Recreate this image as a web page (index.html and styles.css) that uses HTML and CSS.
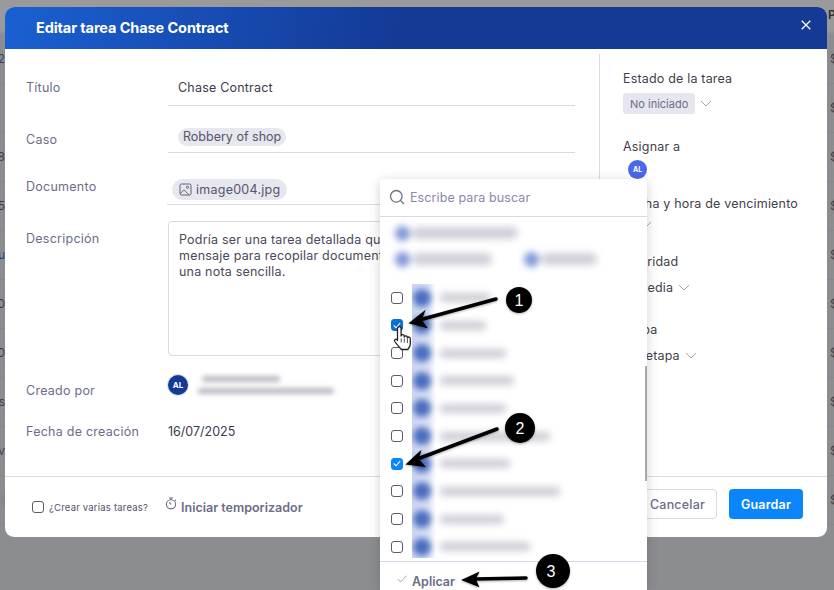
FILE: index.html
```html
<!DOCTYPE html>
<html lang="es">
<head>
<meta charset="utf-8">
<title>Editar tarea</title>
<link rel="stylesheet" href="styles.css">
</head>
<body>
<div class="backdrop">
  <div class="bg-head"><span class="bg-right bg-p">Pe</span></div>
  <div class="bg-row"><span class="bg-left">2</span><span class="bg-right">$$</span></div>
  <div class="bg-row"><span class="bg-right">$$</span></div>
  <div class="bg-row"><span class="bg-left">08</span><span class="bg-right">$$</span></div>
  <div class="bg-row"><span class="bg-left">55</span><span class="bg-right">$$</span></div>
  <div class="bg-row"><span class="bg-left bg-blue">u</span><span class="bg-right">$$</span></div>
  <div class="bg-row"><span class="bg-left">0</span><span class="bg-right">$$</span></div>
  <div class="bg-row"><span class="bg-left">20</span><span class="bg-right">$$</span></div>
  <div class="bg-row"><span class="bg-left">es</span><span class="bg-right">$$</span></div>
  <div class="bg-row"><span class="bg-left">v</span><span class="bg-right">$$</span></div>
  <div class="bg-row bg-last">
    <span class="bg-blur bg-b1"></span>
    <span class="bg-blur-av"></span>
    <span class="bg-blur bg-b2"></span>
    <span class="bg-blur bg-b3"></span>
    <span class="bg-select">Seleccione una opción...</span>
    <span class="bg-right">$$</span>
  </div>
</div>

<div class="modal">
  <header class="modal-head">
    <h1 class="modal-title">Editar tarea Chase Contract</h1>
    <svg class="close-icon" width="10" height="10" viewBox="0 0 10 10"><path d="M.7.7l8.6 8.6M9.3.7L.7 9.300" stroke="#fff" stroke-width="1.300" fill="none"/></svg>
  </header>
  <div class="modal-main">
    <div class="form">
      <div class="row row-title">
        <div class="label">Título</div>
        <div class="value">Chase Contract</div>
      </div>
      <div class="row row-case">
        <div class="label">Caso</div>
        <div class="value"><span class="chip">Robbery of shop</span></div>
      </div>
      <div class="row row-doc">
        <div class="label">Documento</div>
        <div class="value"><span class="chip chip-doc">
          <svg width="13" height="13" viewBox="0 0 13 13" fill="none" stroke="#5f5e78" stroke-width="1"><rect x="1" y="1" width="11" height="11" rx="1.500"/><circle cx="8.500" cy="4.300" r="1.100"/><path d="M1.300 10.500L5 6.800l5 5"/></svg>
          image004.jpg</span></div>
      </div>
      <div class="row row-desc">
        <div class="label">Descripción</div>
        <div class="textarea">Podría ser una tarea detallada que<br>mensaje para recopilar documentos<br>una nota sencilla.</div>
      </div>
      <div class="row row-creator">
        <div class="label">Creado por</div>
        <div class="creator">
          <span class="avatar avatar-dark">AL</span>
          <div class="creator-blur"><span class="cb cb1"></span><span class="cb cb2"></span></div>
        </div>
      </div>
      <div class="row row-date">
        <div class="label">Fecha de creación</div>
        <div class="date">16/07/2025</div>
      </div>
    </div>
    <aside class="side">
      <div class="side-label side-first">Estado de la tarea</div>
      <div class="side-value side-status"><span class="status">No iniciado</span>
        <svg class="chev" width="12" height="7" viewBox="0 0 12 7"><path d="M1 1l5 5 5-5"/></svg></div>
      <div class="side-label side-assign">Asignar a</div>
      <span class="avatar avatar-light">AL</span>
      <div class="side-label side-due">Fecha y hora de vencimiento</div>
      <div class="side-value side-dueval"><svg class="chev" width="12" height="7" viewBox="0 0 12 7"><path d="M1 1l5 5 5-5"/></svg></div>
      <div class="side-label side-gap">Prioridad</div>
      <div class="side-value side-prio">Media <svg class="chev" width="12" height="7" viewBox="0 0 12 7"><path d="M1 1l5 5 5-5"/></svg></div>
      <div class="side-label side-gap2">Etapa</div>
      <div class="side-value">Sin etapa <svg class="chev" width="12" height="7" viewBox="0 0 12 7"><path d="M1 1l5 5 5-5"/></svg></div>
    </aside>
  </div>
  <footer class="modal-foot">
    <span class="box"></span>
    <span class="multi">¿Crear varias tareas?</span>
    <span class="timer">
      <svg width="12" height="13" viewBox="0 0 12 13" fill="none" stroke="#6d6c88" stroke-width="1.100"><circle cx="6" cy="7.300" r="4.600"/><path d="M4 1h4M6 1v2M6 7.300l-1.800-2M10 2.800l1 1"/></svg>
      Iniciar temporizador</span>
    <div class="actions">
      <button class="btn btn-cancel">Cancelar</button>
      <button class="btn btn-save">Guardar</button>
    </div>
  </footer>
</div>

<div class="popup">
  <div class="search">
    <svg width="16" height="16" viewBox="0 0 16 16" fill="none" stroke="#6f7084" stroke-width="1.300"><circle cx="7.300" cy="7.300" r="5.800"/><path d="M11.500 11.500L15 15"/></svg>
    <span>Escribe para buscar</span>
  </div>
  <div class="picked">
    <div class="picked-line"><span class="pk-av"></span><span class="pk-bar pk-a"></span></div>
    <div class="picked-line"><span class="pk-av"></span><span class="pk-bar pk-b"></span><span class="pk-av pk-next"></span><span class="pk-bar pk-c"></span></div>
  </div>
  <div class="list">
    <div class="item"><span class="box"></span><div class="person"><span class="p-av"></span><span class="p-name n1"></span></div></div>
    <div class="item"><span class="box box-on box-hover"><svg width="8" height="7" viewBox="0 0 8 7"><path d="M.8 3.500l2.300 2.300L7.200 1" stroke="#fff" stroke-width="1.100" fill="none"/></svg></span><div class="person"><span class="p-av"></span><span class="p-name n2"></span></div></div>
    <div class="item"><span class="box"></span><div class="person"><span class="p-av"></span><span class="p-name n3"></span></div></div>
    <div class="item"><span class="box"></span><div class="person"><span class="p-av"></span><span class="p-name n4"></span></div></div>
    <div class="item"><span class="box"></span><div class="person"><span class="p-av"></span><span class="p-name n5"></span></div></div>
    <div class="item"><span class="box"></span><div class="person"><span class="p-av"></span><span class="p-name n6"></span></div></div>
    <div class="item"><span class="box box-on"><svg width="8" height="7" viewBox="0 0 8 7"><path d="M.8 3.500l2.300 2.300L7.200 1" stroke="#fff" stroke-width="1.100" fill="none"/></svg></span><div class="person"><span class="p-av"></span><span class="p-name n7"></span></div></div>
    <div class="item"><span class="box"></span><div class="person"><span class="p-av"></span><span class="p-name n8"></span></div></div>
    <div class="item"><span class="box"></span><div class="person"><span class="p-av"></span><span class="p-name n9"></span></div></div>
    <div class="item"><span class="box"></span><div class="person"><span class="p-av"></span><span class="p-name n10"></span></div></div>
  </div>
  <div class="apply">
    <svg width="10" height="8" viewBox="0 0 10 8"><path d="M.7 4l3 3L9.300.7" stroke="#a5a4ba" stroke-width="1" fill="none"/></svg>
    <span>Aplicar</span>
  </div>
  <span class="scrollbar"></span>
</div>

<svg class="marks" width="834" height="590" viewBox="0 0 834 590">
  <defs>
    <filter id="soft" x="-20%" y="-20%" width="140%" height="140%"><feDropShadow dx="0" dy="1" stdDeviation="1" flood-color="#000" flood-opacity=".3"/></filter>
  </defs>
  <g filter="url(#soft)">
    <path d="M496 299L423 319" stroke="#000" stroke-width="3.500" stroke-linecap="round"/>
    <path d="M410 323L424 312L421 320L426 327Z" fill="#000" stroke="#000" stroke-width="1.500"/>
    <circle cx="519" cy="300" r="13"/>
    <path d="M497 429L420 458" stroke="#000" stroke-width="3.500" stroke-linecap="round"/>
    <path d="M407 464L420 452L418 459L424 466Z" fill="#000" stroke="#000" stroke-width="1.500"/>
    <circle cx="520" cy="428" r="15"/>
    <path d="M526 578L476 579" stroke="#000" stroke-width="3.500" stroke-linecap="round"/>
    <path d="M463 580L478 573L475 579L478 586Z" fill="#000" stroke="#000" stroke-width="1.500"/>
    <circle cx="553" cy="571" r="17"/>
  </g>
  <text class="mark-num" x="519" y="305.500">1</text>
  <text class="mark-num" x="520" y="433.500">2</text>
  <text class="mark-num" x="551" y="577">3</text>
  <g transform="translate(0 -1.500)">
    <path d="M397.500 330a1.800 1.800 0 0 1 3.600 0v7.500a1.600 1.600 0 0 1 3.200 0.300v.7a1.600 1.600 0 0 1 3.100.3v.7a1.500 1.500 0 0 1 2.900.5v5.500c0 2.500-1 3.800-2.500 5.500h-6.500c-2-2.500-4.500-5-6.500-8-1-1.800 1-3 2.200-1.800l.5.800z" fill="#fff" stroke="#222" stroke-width="1.300" stroke-linejoin="round"/>
    <path d="M401.200 340v4M404.300 340v4M407.400 340.500v4" stroke="#222" stroke-width=".8"/>
  </g>
</svg>
</body>
</html>
```
FILE: styles.css
```css
* { box-sizing: border-box; }
html, body { margin: 0; height: 590px; overflow: hidden; }
body {
  position: relative;
  font-family: Inter, "Noto Sans", "Liberation Sans", sans-serif;
  font-size: 12.5px;
  color: #3b3a48;
  background: #8c8d90;
}

/* Dimmed page behind the dialog */
.backdrop {
  position: absolute;
  inset: 0;
  display: flex;
  flex-direction: column;
  background: #8c8d90;
  overflow: hidden;
}
.bg-head { height: 35px; background: linear-gradient(#9a9a9a 30px, #8c8d90 35px); display: flex; align-items: center; flex: none; padding-bottom: 5px; }
.bg-row { height: 49px; flex: none; display: flex; align-items: center; border-bottom: 1px solid #86868a; position: relative; }
.bg-left {
  width: 5px; height: 16px; overflow: hidden; display: flex; justify-content: flex-end;
  white-space: nowrap; color: #3f3f48; font-size: 12px; line-height: 16px;
}
.bg-blue { color: #27417f; }
.bg-right {
  margin-left: auto; width: 4px; overflow: hidden; white-space: nowrap;
  color: #3f3f4c; font-size: 12px; line-height: 14px;
}
.bg-p { color: #2b2b33; font-weight: 600; width: 6px; margin-left: auto; }
.bg-last { padding-left: 5px; }
.bg-blur { height: 9px; background: #6d6e72; border-radius: 3px; filter: blur(3px); flex: none; }
.bg-b1 { width: 68px; margin-right: 117px; }
.bg-blur-av { width: 18px; height: 20px; border-radius: 50%; background: #35508f; filter: blur(2px); margin-right: 12px; flex: none; }
.bg-b2 { width: 70px; height: 14px; margin-right: 60px; }
.bg-b3 { width: 30px; margin-right: 284px; }
.bg-select { color: #2a2a32; font-size: 10.5px; letter-spacing: .15px; white-space: nowrap; }

/* Dialog */
.modal {
  position: absolute;
  left: 5px;
  top: 7px;
  width: 822px;
  height: 530px;
  background: #fff;
  border-radius: 9px;
  display: flex;
  flex-direction: column;
}
.modal-head {
  height: 42px;
  flex: none;
  border-radius: 9px 9px 0 0;
  background: linear-gradient(100deg, #1a60d2 0%, #143a96 48%, #143a96 100%);
  display: flex;
  align-items: center;
  justify-content: space-between;
  padding: 0 16px 0 31px;
}
.modal-title { margin: 0 0 2px; color: #fff; font-size: 14.500px; font-weight: 700; letter-spacing: -.1px; }
.close-icon { margin-top: -6px; }

.modal-main { flex: 1; display: flex; min-height: 0; }
.form { width: 594px; flex: none; padding: 21px 0 0 21px; }
.row { display: grid; grid-template-columns: 142px 407px; align-items: start; }
.label { color: #6d6c88; line-height: 16px; padding-top: 26px; letter-spacing: .25px; }
.value { border-bottom: 1px solid #d9d7e8; color: #3b3a48; }

.row-title .label { padding-top: 10px; }
.row-title .value { height: 36px; padding: 9px 0 0 10px; line-height: 18px; letter-spacing: .2px; }
.row-case .value { height: 47px; padding: 22px 0 0 10px; }
.row-doc .value { height: 52px; padding: 26px 0 0 5px; margin-left: -1px; }
.chip {
  display: inline-flex; align-items: center; height: 18px; padding: 0 5px;
  background: #e7e7ef; border-radius: 9px; color: #55546a; line-height: 18px;
}
.chip-doc { height: 21px; border-radius: 11px; gap: 4px; padding: 0 7px; letter-spacing: .25px; }
.textarea {
  margin-top: 16px; height: 135px; border: 1px solid #d9d7e8; border-radius: 4px;
  padding: 10px 10px; line-height: 16px; color: #4a4958; white-space: nowrap; overflow: hidden;
  font-size: 12.500px; letter-spacing: .2px;
}
.row-creator { height: 42px; }
.row-creator .label { padding-top: 27px; }
.creator { display: flex; align-items: center; gap: 10px; padding-top: 19px; }
.avatar {
  display: flex; align-items: center; justify-content: center; flex: none;
  border-radius: 50%; color: #fff; font-weight: 700; font-size: 8px;
}
.avatar-dark { width: 20px; height: 20px; background: #143a96; box-shadow: 0 0 0 1px #dfe3f0; }
.avatar-light { width: 19px; height: 19px; background: #4a68e8; margin: 5px 0 0 5px; font-size: 7px; }
.creator-blur { display: flex; flex-direction: column; gap: 6px; filter: blur(2.500px); }
.cb { display: block; height: 6px; background: #b9b9c4; border-radius: 3px; }
.cb1 { width: 78px; margin-left: 4px; }
.cb2 { width: 136px; }
.date { padding-top: 26px; line-height: 16px; color: #3b3a48; }

/* Right column */
.side { flex: 1; margin-top: 5px; border-left: 1px solid #d9d7e8; padding-left: 23px; color: #3f3f4a; }
.side-label { line-height: 16px; color: #3f3f4a; letter-spacing: .18px; }
.side-first { margin-top: 17px; }
.side-value { display: flex; align-items: center; gap: 5px; height: 22px; margin-top: 6px; color: #3f3f4a; letter-spacing: .18px; }
.side-status { height: 21px; }
.status { display: flex; align-items: center; height: 21px; padding: 0 7px; background: #e6e6ee; border-radius: 3px; color: #6d6c88; font-size: 11px; letter-spacing: 0; }
.side-assign { margin-top: 25px; }
.side-due { margin-top: 17px; }
.side-dueval { padding-left: 17px; height: 20px; margin-top: 2px; }
.side-gap { margin-top: 20px; }
.side-prio { padding-left: 13px; }
.side-gap2 { margin-top: 24px; }
.chev { fill: none; stroke: #a5a4ba; stroke-width: 1; flex: none; }

/* Footer */
.modal-foot {
  height: 61px; flex: none; border-top: 1px solid #d9d7e8;
  display: flex; align-items: center; padding: 0 24px 0 27px;
}
.box {
  display: inline-flex; align-items: center; justify-content: center;
  width: 12px; height: 12px; flex: none; background: #fff;
  border: 1px solid #5a5a70; border-radius: 3px;
}
.box-on { background: #0a85fb; border-color: #0a85fb; }
.box-hover { background: #0a6fd4; border-color: #0a6fd4; }
.multi { margin-left: 5px; font-size: 9.500px; color: #55546a; letter-spacing: .2px; }
.timer { margin-left: 17px; display: flex; align-items: center; gap: 4px; font-weight: 600; font-size: 12.500px; color: #6d6c88; }
.timer svg { margin-top: -8px; }
.actions { margin-left: auto; display: flex; gap: 12px; margin-bottom: 6px; }
.btn { height: 30px; border-radius: 4px; font: inherit; font-size: 12.500px; }
.btn-cancel { width: 79px; background: #fff; border: 1px solid #d9d7e8; color: #6d6c88; font-weight: 500; padding: 0; letter-spacing: .2px; }
.btn-save { width: 74px; background: #0a85fb; border: 0; color: #fff; font-weight: 600; padding: 0; letter-spacing: .2px; }

/* Dropdown over the dialog */
.popup {
  position: absolute;
  left: 380px;
  top: 179px;
  width: 267px;
  height: 411px;
  background: #fff;
  border-radius: 4px 4px 0 0;
  box-shadow: 0 2px 12px rgba(0, 0, 0, .18);
  display: flex;
  flex-direction: column;
  overflow: hidden;
}
.search {
  height: 38px; flex: none; display: flex; align-items: center; gap: 5px;
  padding: 0 0 1px 9px; border-bottom: 1px solid #d9d7e8; color: #8a88a8; font-size: 12.500px; letter-spacing: .1px;
}
.picked {
  margin: 4px 0 0 9px; height: 53px; width: 240px; flex: none; padding: 4px 6px;
  display: flex; flex-direction: column; gap: 10px; filter: blur(3.500px);
}
.picked-line { display: flex; align-items: center; height: 16px; }
.pk-av { width: 15px; height: 15px; border-radius: 50%; background: #7d95d8; flex: none; margin-right: 2px; }
.pk-bar { height: 12px; background: #cfcfd9; border-radius: 6px; }
.pk-a { width: 106px; }
.pk-b { width: 80px; }
.pk-next { margin-left: 32px; }
.pk-c { width: 56px; }
.list { height: 274px; flex: none; margin-top: 10px; padding-left: 11px; overflow: hidden; }
.item { height: 27.670px; display: flex; align-items: center; gap: 9px; }
.person { flex: 1; height: 100%; display: flex; align-items: center; gap: 9px; overflow: hidden; background: linear-gradient(90deg, #cdd6f0 0, #d9e0f4 16px, #fff 24px); }
.p-av { width: 18px; height: 18px; flex: none; border-radius: 50%; background: #4a6dbf; filter: blur(3px); margin-left: 1px; }
.p-name { display: block; height: 9px; background: #cdcdd6; border-radius: 4px; filter: blur(3.500px); }
.n1 { width: 50px; } .n2 { width: 46px; } .n3 { width: 66px; } .n4 { width: 74px; } .n5 { width: 66px; }
.n6 { width: 110px; } .n7 { width: 70px; } .n8 { width: 120px; } .n9 { width: 64px; } .n10 { width: 90px; }
.apply {
  border-top: 1px solid #d9d7e8; margin-top: 3px; flex: 1; display: flex; gap: 5px;
  padding: 12px 0 0 17px; color: #6d6c88; font-weight: 600; font-size: 12.500px; align-items: flex-start;
}
.apply svg { margin-top: 1px; }
.scrollbar { position: absolute; right: 0; top: 187px; width: 2.500px; height: 115px; background: #a8a8a8; }

/* Annotations drawn on the screenshot */
.marks { position: absolute; left: 0; top: 0; pointer-events: none; }
.mark-num { fill: #fff; font-family: "Liberation Sans", sans-serif; font-size: 16px; text-anchor: middle; }
```
